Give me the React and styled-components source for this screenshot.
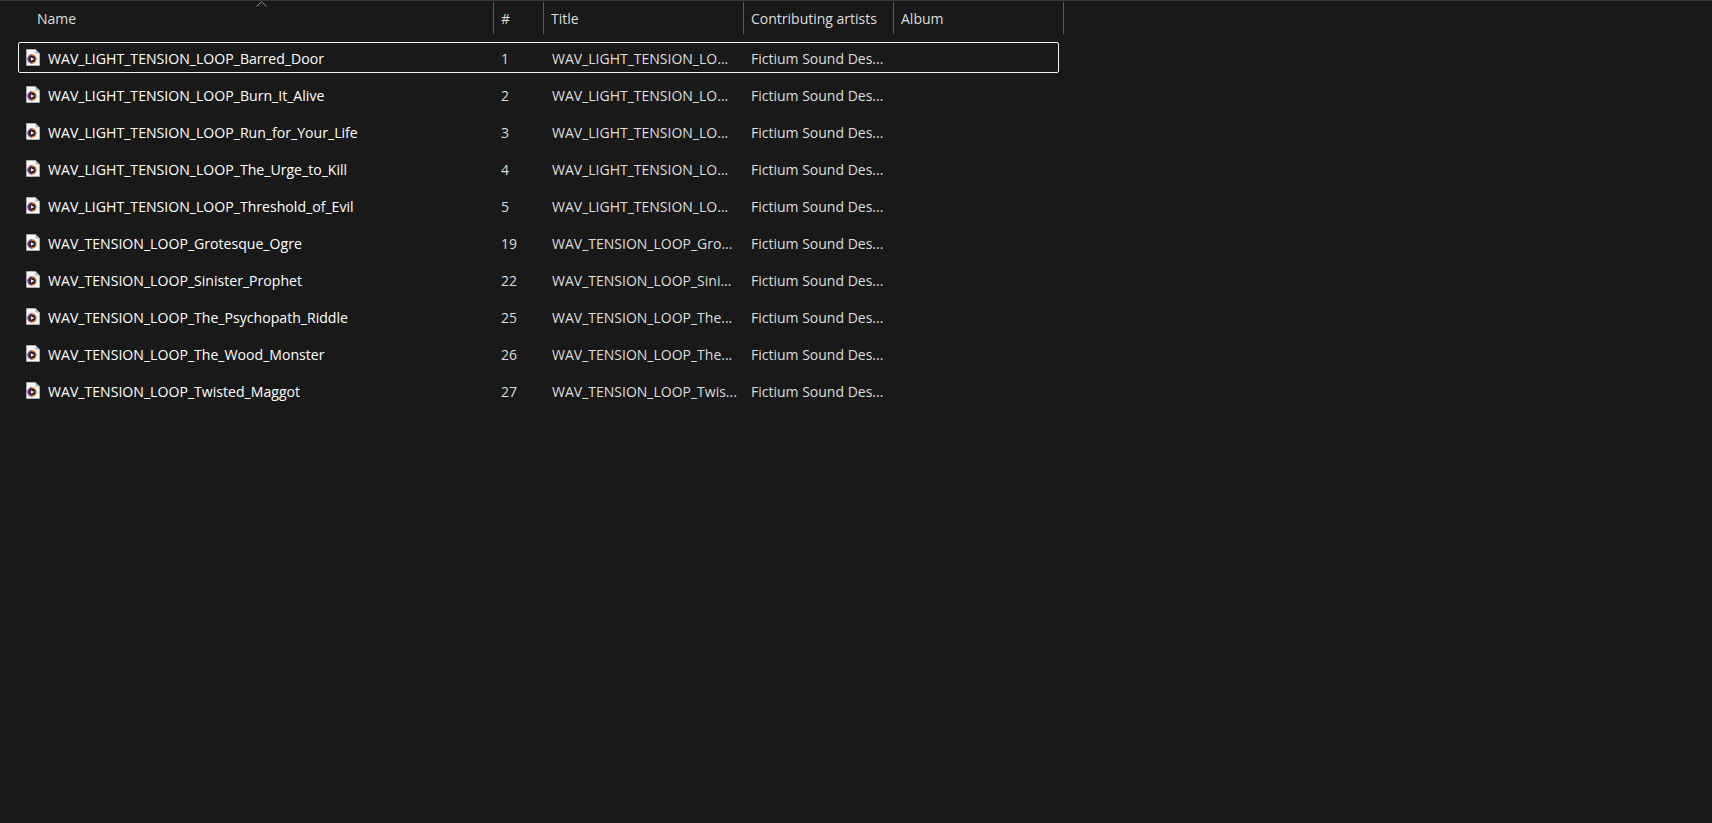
import styled, { createGlobalStyle } from "styled-components";

const GlobalStyle = createGlobalStyle`
  html, body {
    margin: 0;
    padding: 0;
    height: 100%;
    background: #191919;
  }
`;

const COLUMNS = "494px 50px 200px 150px 170px";

const Explorer = styled.div`
  height: 823px;
  box-sizing: border-box;
  overflow: hidden;
  background: #191919;
  border-top: 1px solid #3a3a3a;
  font-family: "Open Sans", "Noto Sans", sans-serif;
  font-size: 14px;
  color: #fff;
`;

const Header = styled.div`
  position: relative;
  display: grid;
  grid-template-columns: ${COLUMNS};
  width: 1064px;
  height: 32px;
  margin-top: 1px;
`;

const HeaderCell = styled.div`
  display: flex;
  align-items: center;
  box-sizing: border-box;
  padding-left: ${(p) => p.$pad ?? 7}px;
  border-right: 1px solid #5a5a5a;
  color: #dedede;
`;

const SortArrow = styled.svg`
  position: absolute;
  left: 256px;
  top: -1px;
  width: 11px;
  height: 6px;
`;

const Rows = styled.div`
  display: flex;
  flex-direction: column;
  gap: 6px;
  margin-top: 8px;
  padding-left: 18px;
`;

const Row = styled.div`
  display: grid;
  grid-template-columns: 475px 51px 199px 150px;
  align-items: center;
  box-sizing: border-box;
  width: 1041px;
  height: 31px;
  padding-top: 2px;
  border: 1px solid ${(p) => (p.$focused ? "#f2f2f2" : "transparent")};
  border-radius: 2px;
`;

const NameCell = styled.div`
  display: flex;
  align-items: center;
  gap: 8px;
  padding-left: 7px;
  font-size: 14.1px;
  white-space: nowrap;
  color: #fff;
`;

const Cell = styled.div`
  padding-left: 7px;
  white-space: nowrap;
  color: #dedede;
`;

const FileIcon = styled.svg`
  flex: none;
  width: 14px;
  height: 17px;
  margin-top: -2px;
`;

function AudioFileIcon() {
  return (
    <FileIcon viewBox="0 0 14 17">
      <path d="M0.5 0.5 H9.5 L13.5 4.5 V16.5 H0.5 Z" fill="#f6f6f6" stroke="#c8c8c8" strokeWidth="0.6" />
      <path d="M9.5 0.5 V4.5 H13.5 Z" fill="#b4b4b4" />
      <circle cx="6" cy="10" r="4.7" fill="#d9772e" />
      <path d="M6 5.3 A4.7 4.7 0 0 0 6 14.7 Z" fill="#8a4aa8" />
      <circle cx="6" cy="10" r="3.3" fill="#2a2026" />
      <path d="M4.9 8.2 L8.2 10 L4.9 11.8 Z" fill="#fff" />
    </FileIcon>
  );
}

const tracks = [
  ["WAV_LIGHT_TENSION_LOOP_Barred_Door", "1", "WAV_LIGHT_TENSION_LO..."],
  ["WAV_LIGHT_TENSION_LOOP_Burn_It_Alive", "2", "WAV_LIGHT_TENSION_LO..."],
  ["WAV_LIGHT_TENSION_LOOP_Run_for_Your_Life", "3", "WAV_LIGHT_TENSION_LO..."],
  ["WAV_LIGHT_TENSION_LOOP_The_Urge_to_Kill", "4", "WAV_LIGHT_TENSION_LO..."],
  ["WAV_LIGHT_TENSION_LOOP_Threshold_of_Evil", "5", "WAV_LIGHT_TENSION_LO..."],
  ["WAV_TENSION_LOOP_Grotesque_Ogre", "19", "WAV_TENSION_LOOP_Gro..."],
  ["WAV_TENSION_LOOP_Sinister_Prophet", "22", "WAV_TENSION_LOOP_Sini..."],
  ["WAV_TENSION_LOOP_The_Psychopath_Riddle", "25", "WAV_TENSION_LOOP_The..."],
  ["WAV_TENSION_LOOP_The_Wood_Monster", "26", "WAV_TENSION_LOOP_The..."],
  ["WAV_TENSION_LOOP_Twisted_Maggot", "27", "WAV_TENSION_LOOP_Twis..."],
];

export default function App() {
  return (
    <Explorer>
      <GlobalStyle />
      <Header>
        <HeaderCell $pad={37}>Name</HeaderCell>
        <HeaderCell>#</HeaderCell>
        <HeaderCell>Title</HeaderCell>
        <HeaderCell>Contributing artists</HeaderCell>
        <HeaderCell>Album</HeaderCell>
        <SortArrow viewBox="0 0 11 6">
          <path d="M0.5 5.5 L5.5 0.8 L10.5 5.5" fill="none" stroke="#9a9a9a" strokeWidth="1" />
        </SortArrow>
      </Header>
      <Rows>
        {tracks.map(([name, number, title], i) => (
          <Row key={name} $focused={i === 0}>
            <NameCell>
              <AudioFileIcon />
              {name}
            </NameCell>
            <Cell>{number}</Cell>
            <Cell>{title}</Cell>
            <Cell>Fictium Sound Des...</Cell>
          </Row>
        ))}
      </Rows>
    </Explorer>
  );
}
